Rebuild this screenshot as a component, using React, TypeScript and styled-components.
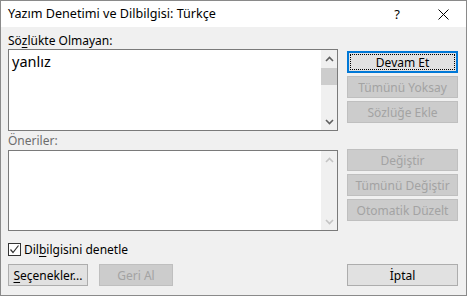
import React from "react";
import styled, { createGlobalStyle } from "styled-components";

const Global = createGlobalStyle`
  html, body { margin: 0; padding: 0; background: #ffffff; }
  #root { width: 467px; height: 296px; }
`;

const FONT = `"Noto Sans", "Open Sans", "Liberation Sans", sans-serif`;

const Window = styled.div`
  width: 467px;
  height: 296px;
  box-sizing: border-box;
  border: 1px solid #8a8a8a;
  background: #f0f0f0;
  display: flex;
  flex-direction: column;
  font-family: ${FONT};
  font-size: 12px;
  color: #000;
  overflow: hidden;
`;

const TitleBar = styled.div`
  height: 26px;
  flex: none;
  background: #ffffff;
  display: flex;
  align-items: center;
  padding-left: 7px;
`;

const TitleText = styled.div`
  flex: 1;
  font-size: 12.6px;
  line-height: 16px;
  white-space: nowrap;
`;

const CaptionButton = styled.div`
  width: 46px;
  height: 26px;
  display: flex;
  align-items: center;
  justify-content: center;
  font-size: 13px;
  color: #000;
`;

const Body = styled.div`
  flex: 1;
  padding: 6px 8px 0 7px;
  display: grid;
  grid-template-columns: 330px 111px;
  column-gap: 9px;
  align-content: start;
`;

const Label = styled.div<{ $disabled?: boolean; $mt?: number }>`
  grid-column: 1;
  height: 15px;
  line-height: 15px;
  margin-top: ${(p) => p.$mt ?? 0}px;
  color: ${(p) => (p.$disabled ? "#6d6d6d" : "#000")};
  white-space: nowrap;
`;

const Acc = styled.u`
  text-decoration: underline;
  text-underline-offset: 2px;
  text-decoration-thickness: 1px;
`;

const ListBox = styled.div<{ $h: number; $mt: number }>`
  grid-column: 1;
  height: ${(p) => p.$h}px;
  margin-top: ${(p) => p.$mt}px;
  box-sizing: border-box;
  border: 1px solid #7a7a7a;
  background: #ffffff;
  display: flex;
`;

const ListContent = styled.div`
  flex: 1;
  padding: 2px 3px;
  font-size: 14.5px;
  line-height: 18px;
`;

const ScrollBar = styled.div`
  width: 16px;
  background: #f0f0f0;
  display: flex;
  flex-direction: column;
`;

const ScrollArrow = styled.div`
  height: 17px;
  display: flex;
  align-items: center;
  justify-content: center;
`;

const ScrollThumb = styled.div`
  height: 17px;
  margin-top: 1px;
  background: #cdcdcd;
`;

const ScrollTrack = styled.div`
  flex: 1;
`;

const ButtonStack = styled.div<{ $mt: number }>`
  grid-column: 2;
  margin-top: ${(p) => p.$mt}px;
  display: flex;
  flex-direction: column;
  gap: 3px;
`;

const Button = styled.div<{ $disabled?: boolean; $focused?: boolean; $w?: number }>`
  position: relative;
  height: 22px;
  width: ${(p) => (p.$w ? `${p.$w}px` : "auto")};
  box-sizing: border-box;
  display: flex;
  align-items: center;
  justify-content: center;
  font-size: 12px;
  line-height: 15px;
  white-space: nowrap;
  background: ${(p) => (p.$disabled ? "#cccccc" : "#e1e1e1")};
  border: ${(p) =>
    p.$focused ? "2px solid #0078d7" : p.$disabled ? "1px solid #bfbfbf" : "1px solid #adadad"};
  color: ${(p) => (p.$disabled ? "#a3a3a3" : "#000")};
`;

const FocusRect = styled.span`
  position: absolute;
  inset: 1px;
  border: 1px dotted #000;
  pointer-events: none;
`;

const CheckRow = styled.div`
  grid-column: 1 / span 2;
  margin-top: 11px;
  height: 15px;
  display: flex;
  align-items: center;
  gap: 3px;
  line-height: 15px;
`;

const CheckBox = styled.div`
  width: 13px;
  height: 13px;
  box-sizing: border-box;
  border: 1px solid #333333;
  background: #ffffff;
  display: flex;
  align-items: center;
  justify-content: center;
`;

const BottomLeft = styled.div`
  grid-column: 1;
  margin-top: 7px;
  display: flex;
  gap: 11px;
`;

const BottomRight = styled.div`
  grid-column: 2;
  margin-top: 7px;
  display: flex;
  flex-direction: column;
`;

const Chevron: React.FC<{ up?: boolean; color: string }> = ({ up, color }) => (
  <svg width="9" height="6" viewBox="0 0 9 6">
    <path
      d={up ? "M1 5 L4.5 1.5 L8 5" : "M1 1 L4.5 4.5 L8 1"}
      fill="none"
      stroke={color}
      strokeWidth="1.6"
    />
  </svg>
);

const ScrollColumn: React.FC<{ disabled?: boolean }> = ({ disabled }) => {
  const c = disabled ? "#c4c4c4" : "#606060";
  return (
    <ScrollBar>
      <ScrollArrow>
        <Chevron up color={c} />
      </ScrollArrow>
      {!disabled && <ScrollThumb />}
      <ScrollTrack />
      <ScrollArrow>
        <Chevron color={c} />
      </ScrollArrow>
    </ScrollBar>
  );
};

export default function App() {
  return (
    <>
      <Global />
      <Window>
        <TitleBar>
          <TitleText>Yazım Denetimi ve Dilbilgisi: Türkçe</TitleText>
          <CaptionButton>?</CaptionButton>
          <CaptionButton>
            <svg width="11" height="11" viewBox="0 0 11 11">
              <path d="M0.5 0.5 L10.5 10.5 M10.5 0.5 L0.5 10.5" stroke="#000" strokeWidth="1" />
            </svg>
          </CaptionButton>
        </TitleBar>
        <Body>
          <Label>
            Sö<Acc>z</Acc>lükte Olmayan:
          </Label>
          <div />
          <ListBox $h={82} $mt={1}>
            <ListContent>yanlız</ListContent>
            <ScrollColumn />
          </ListBox>
          <ButtonStack $mt={3}>
            <Button $focused>
              <FocusRect />
              De<Acc>v</Acc>am Et
            </Button>
            <Button $disabled>Tümünü Yoksay</Button>
            <Button $disabled>Sözlüğe Ekle</Button>
          </ButtonStack>
          <Label $disabled $mt={2}>
            Öneriler:
          </Label>
          <div />
          <ListBox $h={81} $mt={2}>
            <ListContent />
            <ScrollColumn disabled />
          </ListBox>
          <ButtonStack $mt={1}>
            <Button $disabled>Değiştir</Button>
            <Button $disabled>Tümünü Değiştir</Button>
            <Button $disabled>Otomatik Düzelt</Button>
          </ButtonStack>
          <CheckRow>
            <CheckBox>
              <svg width="11" height="11" viewBox="0 0 11 11">
                <path d="M1.5 5.5 L4 8.5 L9.5 1.5" fill="none" stroke="#333" strokeWidth="1.2" />
              </svg>
            </CheckBox>
            <span>
              Dil<Acc>b</Acc>ilgisini denetle
            </span>
          </CheckRow>
          <BottomLeft>
            <Button $w={80}>
              <Acc>S</Acc>eçenekler...
            </Button>
            <Button $w={74} $disabled>
              Geri Al
            </Button>
          </BottomLeft>
          <BottomRight>
            <Button>İptal</Button>
          </BottomRight>
        </Body>
      </Window>
    </>
  );
}
